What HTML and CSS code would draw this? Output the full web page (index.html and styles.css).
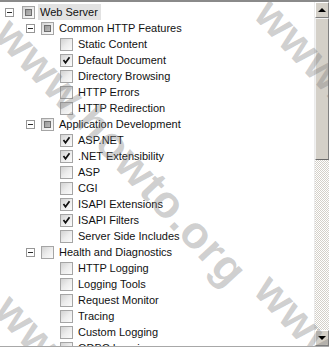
FILE: index.html
```html
<!DOCTYPE html>
<html>
<head>
<meta charset="utf-8">
<link rel="stylesheet" href="styles.css">
</head>
<body>
<div class="window">
  <div class="tree">
    <div class="row l0"><span class="exp"></span><span class="cb tri"></span><span class="label sel">Web Server</span></div>
    <div class="row l1"><span class="exp"></span><span class="cb tri"></span><span class="label">Common HTTP Features</span></div>
    <div class="row l2"><span class="nexp"></span><span class="cb"></span><span class="label">Static Content</span></div>
    <div class="row l2"><span class="nexp"></span><span class="cb on"><svg viewBox="0 0 13 13"><polyline points="3.5,6 5.5,8.8 9.5,3.2"/></svg></span><span class="label">Default Document</span></div>
    <div class="row l2"><span class="nexp"></span><span class="cb"></span><span class="label">Directory Browsing</span></div>
    <div class="row l2"><span class="nexp"></span><span class="cb"></span><span class="label">HTTP Errors</span></div>
    <div class="row l2"><span class="nexp"></span><span class="cb"></span><span class="label">HTTP Redirection</span></div>
    <div class="row l1"><span class="exp"></span><span class="cb tri"></span><span class="label">Application Development</span></div>
    <div class="row l2"><span class="nexp"></span><span class="cb on"><svg viewBox="0 0 13 13"><polyline points="3.5,6 5.5,8.8 9.5,3.2"/></svg></span><span class="label">ASP.NET</span></div>
    <div class="row l2"><span class="nexp"></span><span class="cb on"><svg viewBox="0 0 13 13"><polyline points="3.5,6 5.5,8.8 9.5,3.2"/></svg></span><span class="label">.NET Extensibility</span></div>
    <div class="row l2"><span class="nexp"></span><span class="cb"></span><span class="label">ASP</span></div>
    <div class="row l2"><span class="nexp"></span><span class="cb"></span><span class="label">CGI</span></div>
    <div class="row l2"><span class="nexp"></span><span class="cb on"><svg viewBox="0 0 13 13"><polyline points="3.5,6 5.5,8.8 9.5,3.2"/></svg></span><span class="label">ISAPI Extensions</span></div>
    <div class="row l2"><span class="nexp"></span><span class="cb on"><svg viewBox="0 0 13 13"><polyline points="3.5,6 5.5,8.8 9.5,3.2"/></svg></span><span class="label">ISAPI Filters</span></div>
    <div class="row l2"><span class="nexp"></span><span class="cb"></span><span class="label">Server Side Includes</span></div>
    <div class="row l1"><span class="exp"></span><span class="cb"></span><span class="label">Health and Diagnostics</span></div>
    <div class="row l2"><span class="nexp"></span><span class="cb"></span><span class="label">HTTP Logging</span></div>
    <div class="row l2"><span class="nexp"></span><span class="cb"></span><span class="label">Logging Tools</span></div>
    <div class="row l2"><span class="nexp"></span><span class="cb"></span><span class="label">Request Monitor</span></div>
    <div class="row l2"><span class="nexp"></span><span class="cb"></span><span class="label">Tracing</span></div>
    <div class="row l2"><span class="nexp"></span><span class="cb"></span><span class="label">Custom Logging</span></div>
    <div class="row l2"><span class="nexp"></span><span class="cb"></span><span class="label">ODBC Logging</span></div>
  </div>
  <div class="scrollbar">
    <div class="btn"><span class="arrow up"></span></div>
    <div class="track">
      <div class="thumb"></div>
    </div>
    <div class="btn"><span class="arrow down"></span></div>
  </div>
  <span class="wm wm1">www.howto.org</span>
  <span class="wm wm2">www.howto.org</span>
  <span class="wm wm3">www.howto.org</span>
  <span class="wm wm4">www.howto.org</span>
</div>
</body>
</html>
```
FILE: styles.css
```css
html, body {
  margin: 0;
  padding: 0;
  background: #fff;
}
.window {
  position: relative;
  width: 329px;
  height: 347px;
  box-sizing: border-box;
  border-top: 2px solid #8a8a8a;
  border-bottom: 1px solid #a8a8a8;
  display: flex;
  overflow: hidden;
  font-family: "Liberation Sans", Arial, sans-serif;
  font-size: 11px;
  color: #111;
}
.tree {
  flex: 1;
  padding-top: 2px;
  overflow: hidden;
}
.row {
  height: 16px;
  display: flex;
  align-items: center;
  white-space: nowrap;
}
.l0 { padding-left: 5px; }
.l1 { padding-left: 25px; }
.l2 { padding-left: 43px; }
.l1 .exp { margin-left: 1px; }
.l1 .cb { margin-left: 6px; }
.exp, .nexp {
  width: 9px;
  height: 9px;
  box-sizing: border-box;
  flex: none;
}
.exp {
  border: 1px solid #969696;
  background: #fff;
  position: relative;
}
.exp::after {
  content: "";
  position: absolute;
  left: 1px;
  top: 3px;
  width: 5px;
  height: 1px;
  background: #2a2a2a;
}
.cb {
  width: 13px;
  height: 13px;
  box-sizing: border-box;
  margin-left: 8px;
  flex: none;
  border: 1px solid #a5a5a5;
  background: linear-gradient(135deg, #d2d2d2 0%, #ececec 50%, #fbfbfb 100%);
  display: flex;
  align-items: center;
  justify-content: center;
}
.cb svg {
  width: 13px;
  height: 13px;
  flex: none;
  margin: -1px;
}
.cb svg polyline {
  fill: none;
  stroke: #111;
  stroke-width: 1.7;
}
.cb.tri::after {
  content: "";
  width: 7px;
  height: 7px;
  box-sizing: border-box;
  border: 1px solid #6e6e6e;
  background: linear-gradient(135deg, #9b9b9b 0%, #b8b8b8 100%);
}
.label {
  margin-left: 5px;
  line-height: 14px;
}
.label.sel {
  background: #e2e2e2;
  margin-left: 3px;
  padding: 1px 3px 1px 2px;
}
.scrollbar {
  width: 15px;
  flex: none;
  display: flex;
  flex-direction: column;
  border-left: 1px solid #ebebeb;
  box-sizing: border-box;
}
.btn {
  height: 16px;
  flex: none;
  background: #d4d0c8;
  box-sizing: border-box;
  border-top: 1px solid #fff;
  border-left: 1px solid #fff;
  border-right: 1px solid #808080;
  border-bottom: 1px solid #808080;
  display: flex;
  align-items: center;
  justify-content: center;
}
.arrow {
  width: 0;
  height: 0;
  border-left: 4px solid transparent;
  border-right: 4px solid transparent;
}
.arrow.up { border-bottom: 4px solid #000; }
.arrow.down { border-top: 4px solid #000; }
.track {
  flex: 1;
  background-color: #fff;
  background-image: conic-gradient(#d4d0c8 25%, #fff 0 50%, #d4d0c8 0 75%, #fff 0);
  background-size: 2px 2px;
}
.thumb {
  height: 142px;
  box-sizing: border-box;
  background: #d4d0c8;
  border-top: 1px solid #f0f0f0;
  border-left: 1px solid #f0f0f0;
  border-right: 1px solid #808080;
  border-bottom: 1px solid #6a6a6a;
}
.wm {
  position: absolute;
  transform-origin: 0 0;
  transform: rotate(47deg);
  font-family: "Liberation Sans", Arial, sans-serif;
  font-weight: bold;
  font-size: 45px;
  letter-spacing: 1px;
  color: rgba(120, 120, 120, 0.36);
  white-space: nowrap;
  pointer-events: none;
}
.wm1 { left: 22px; top: 6px; }
.wm2 { left: 282px; top: -14px; }
.wm3 { left: 22px; top: 282px; }
.wm4 { left: 282px; top: 262px; }
```
